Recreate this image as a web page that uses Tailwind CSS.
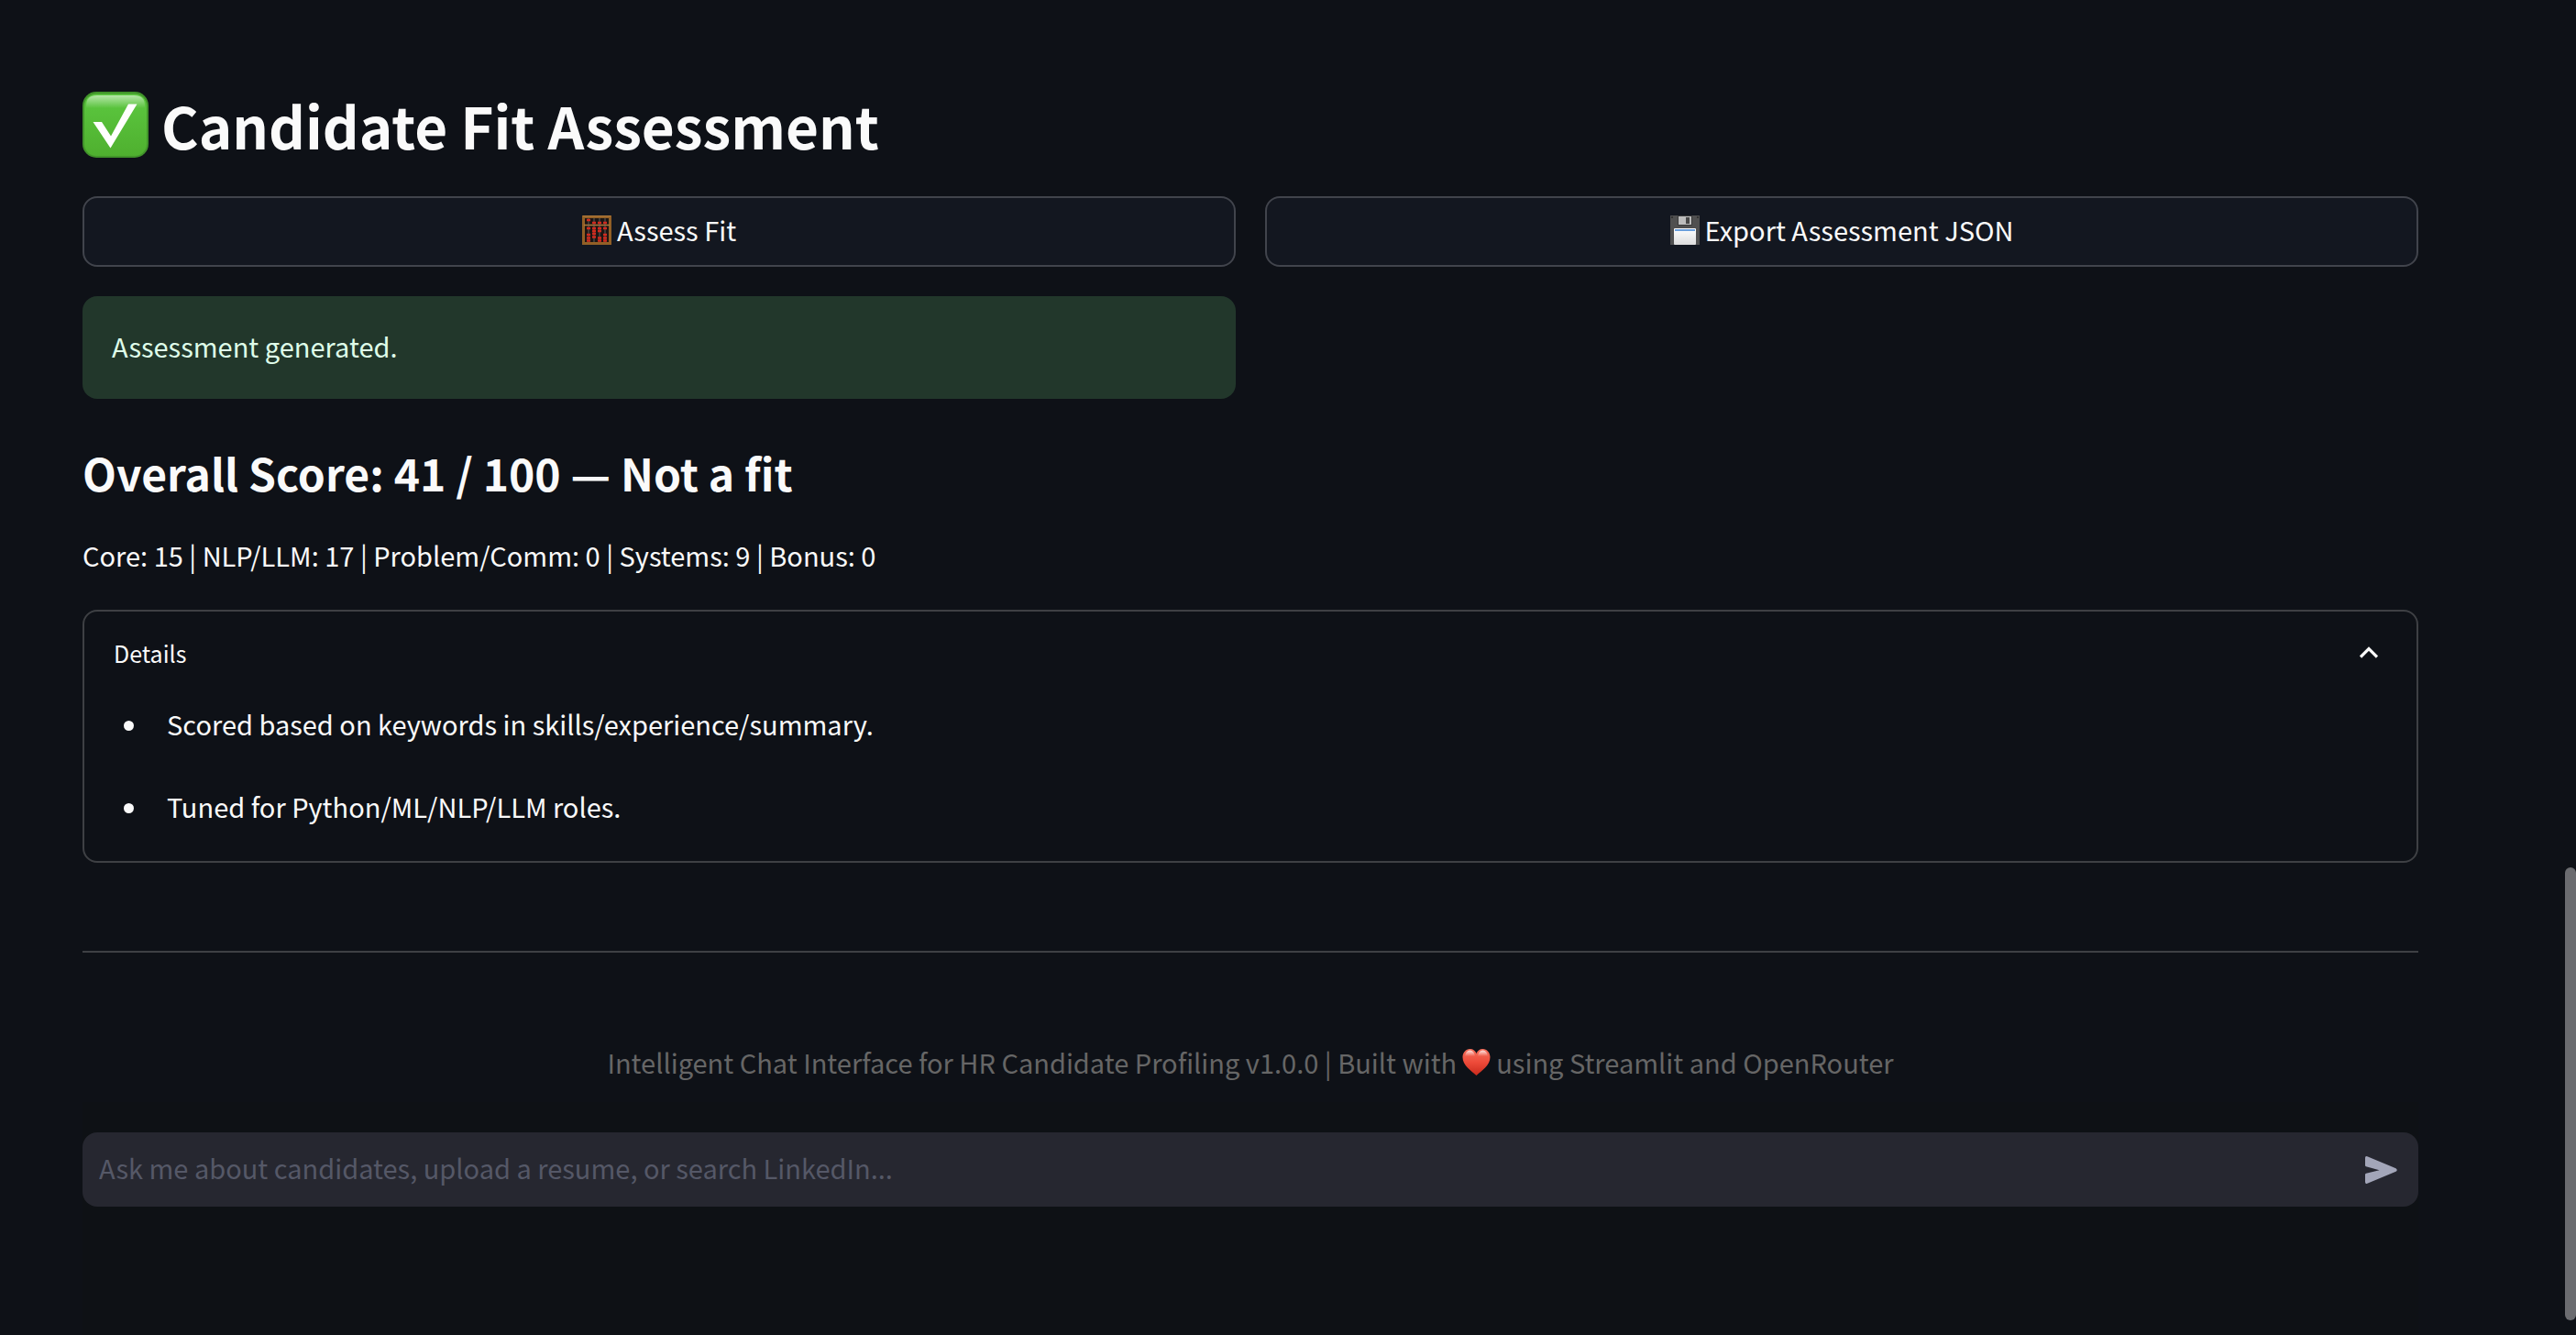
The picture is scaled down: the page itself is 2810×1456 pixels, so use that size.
<!DOCTYPE html>
<html lang="en">
<head>
<meta charset="utf-8">
<meta name="viewport" content="width=device-width, initial-scale=1">
<title>Candidate Fit Assessment</title>
<script src="https://cdn.jsdelivr.net/npm/@tailwindcss/browser@4"></script>
</head>
<body class="bg-[#0e1117] text-[#fafafa] font-['Noto_Sans_CJK_SC',sans-serif] text-[29px] leading-[50px]">
<main class="flex min-h-screen flex-col pl-[90px] pr-[172px] pt-[93px]">
  <h1 class="flex items-center gap-[14px] text-[62px] leading-[86px] font-bold">
    <svg class="size-[72px] shrink-0" viewBox="0 0 72 72" role="img" aria-label="Check mark">
      <defs>
        <linearGradient id="tick" x1="0" y1="0" x2="0" y2="1"><stop offset="0" stop-color="#5cc840"/><stop offset="1" stop-color="#4fb02f"/></linearGradient>
        <linearGradient id="shine" x1="0" y1="0" x2="0" y2="1"><stop offset="0" stop-color="#fff" stop-opacity=".55"/><stop offset="1" stop-color="#fff" stop-opacity="0"/></linearGradient>
      </defs>
      <rect width="72" height="72" rx="15" fill="#41942a"/>
      <rect x="2" y="2.500" width="68" height="67.500" rx="13" fill="url(#tick)"/>
      <path d="M4 18V15Q4 4 16 4H56Q68 4 68 15V18Z" fill="url(#shine)"/>
      <path d="M11.500 33H21L31 48.500 50 13.500H59.500L30.500 61.500Z" fill="#fff"/>
    </svg>
    Candidate Fit Assessment
  </h1>

  <div class="mt-[35px] grid grid-cols-2 gap-8">
    <div class="flex flex-col gap-8">
      <button type="button" class="flex h-[77px] items-center justify-center gap-[6px] rounded-2xl border-2 border-[#41444c] bg-[#131720] pb-[6px]">
        <svg class="mt-[2px] size-8 shrink-0" viewBox="0 0 32 32" aria-hidden="true">
          <rect x="1.500" y="1.500" width="29" height="29" fill="#1b1614" stroke="#925f26" stroke-width="3"/>
          <path d="M1 .500H31M2 10.500H30" stroke="#b07a3a" stroke-width="1.500"/>
          <path d="M7 3V29M13 3V29M19 3V29M25 3V29" stroke="#77706b" stroke-width=".8"/>
          <path d="M5 5H9M11 8H15M17 8H21M23 8H27M5 14H9M11 14H15M17 14H21M23 14H27M11 17H15M17 17H21M5 21H9M11 20H15M23 21H27M5 24.500H9M11 23.500H15M17 24.500H21M23 24.500H27M5 27.500H9M17 27.500H21M23 27.500H27" stroke="#d02a1e" stroke-width="2.300"/>
        </svg>
        Assess Fit
      </button>
      <div role="status" class="rounded-2xl bg-[#22372b] px-8 pt-[30px] pb-[34px] leading-[48px] text-[#dffde9]">Assessment generated.</div>
    </div>
    <div>
      <button type="button" class="flex h-[77px] w-full items-center justify-center gap-[6px] rounded-2xl border-2 border-[#41444c] bg-[#131720] pb-[6px]">
        <svg class="mt-[2px] size-8 shrink-0" viewBox="0 0 32 32" aria-hidden="true">
          <defs><linearGradient id="label" x1="0" y1="0" x2="0" y2="1"><stop offset="0" stop-color="#fff"/><stop offset="1" stop-color="#dcdcdc"/></linearGradient></defs>
          <path d="M0 0H32V32H0Z" fill="#505050"/>
          <path d="M1 1H3V3H1ZM29 1H31V3H29Z" fill="#333"/>
          <path d="M8 0H24V11H8Z" fill="#3a3a3a"/>
          <path d="M9 1H23V10H9Z" fill="#bdbdbd"/>
          <path d="M17 2H21V9H17Z" fill="#484848"/>
          <rect x="4" y="14" width="24" height="18" rx="1" fill="url(#label)"/>
          <path d="M5 15H27V17H5Z" fill="#6a9fdc"/>
        </svg>
        Export Assessment JSON
      </button>
    </div>
  </div>

  <h2 class="mt-[46px] text-[48px] leading-[68px] font-bold">Overall Score: 41 / 100 — Not a fit</h2>
  <p class="mt-[31px]">Core: 15 | NLP/LLM: 17 | Problem/Comm: 0 | Systems: 9 | Bonus: 0</p>

  <details open class="mt-[35px] rounded-2xl border-2 border-[#3e4044] px-8 pt-[25px] pb-[35px]">
    <summary class="flex list-none items-center justify-between text-[25px] leading-[40px]">
      Details
      <svg class="mr-[10px] h-[14px] w-5" viewBox="0 0 20 14" fill="none" stroke="currentColor" stroke-width="3.200" aria-hidden="true"><path d="M1 11.500 10 2.500 19 11.500"/></svg>
    </summary>
    <ul class="mt-8 flex flex-col gap-10">
      <li class="flex items-center gap-9"><span class="mt-1 ml-[11px] size-[11px] rounded-full bg-current"></span>Scored based on keywords in skills/experience/summary.</li>
      <li class="flex items-center gap-9"><span class="mt-1 ml-[11px] size-[11px] rounded-full bg-current"></span>Tuned for Python/ML/NLP/LLM roles.</li>
    </ul>
  </details>

  <hr class="mt-24 border-t-2 border-[#3e4044]">

  <footer class="mt-[94px] flex items-center justify-center gap-[6px] text-[#666666]">
    <span>Intelligent Chat Interface for HR Candidate Profiling v1.0.0 | Built with</span>
    <svg class="h-[29px] w-[31px] shrink-0" viewBox="0 0 31 29" role="img" aria-label="love">
      <defs>
        <linearGradient id="heart" x1="0" y1="0" x2="0" y2="1"><stop offset="0" stop-color="#f4705c"/><stop offset=".5" stop-color="#ee4b3a"/><stop offset="1" stop-color="#c92a1c"/></linearGradient>
        <linearGradient id="gloss" x1="0" y1="0" x2="0" y2="1"><stop offset="0" stop-color="#fff" stop-opacity=".8"/><stop offset="1" stop-color="#fff" stop-opacity="0"/></linearGradient>
      </defs>
      <path d="M15.500 29C10 24 .5 18 .5 9 .5 4 4 0 8.500 0 12 0 14.500 2 15.500 5 16.500 2 19 0 22.500 0 27 0 30.500 4 30.500 9 30.500 18 21 24 15.500 29Z" fill="url(#heart)"/>
      <path d="M3 8Q4 1.500 8.500 1.500T14 8ZM17 8Q18 1.500 22.500 1.500T28 8Z" fill="url(#gloss)"/>
    </svg>
    <span>using Streamlit and OpenRouter</span>
  </footer>

  <div class="mt-[19px] grow bg-[#0e1115] pt-[33px]">
    <form class="flex h-[81px] items-center rounded-2xl bg-[#262730] pr-[23px] pl-[18px]">
      <input type="text" aria-label="Chat message" placeholder="Ask me about candidates, upload a resume, or search LinkedIn..." class="h-full min-w-0 grow bg-transparent pb-[6px] outline-none placeholder:text-[#555867]">
      <button type="button" aria-label="Send" class="text-[#a3a6b9]">
        <svg class="h-[30px] w-9" viewBox="0 0 36 30" fill="currentColor" aria-hidden="true"><path d="M1 2Q1 -.5 3.300 .3L34.500 13.200Q37 15 34.500 16.800L3.300 29.700Q1 30.500 1 28V20Q1 19 2 18.700L16.500 15.200 2 11.300Q1 11 1 10Z"/></svg>
      </button>
    </form>
  </div>
</main>
<div class="fixed top-[65%] right-0 bottom-4 w-3 rounded-full bg-[#6b6c70]" aria-hidden="true"></div>
</body>
</html>
